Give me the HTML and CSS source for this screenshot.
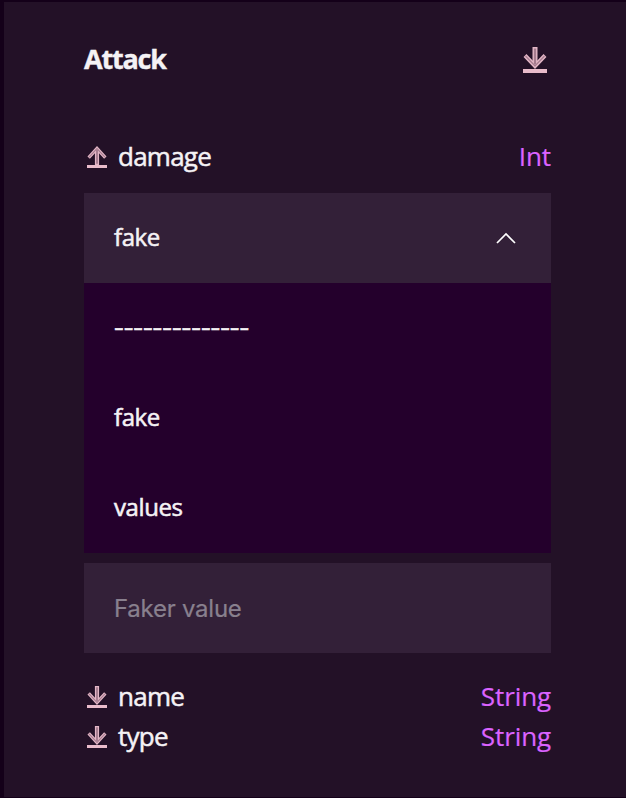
FILE: index.html
```html
<!DOCTYPE html>
<html lang="en">
<head>
<meta charset="utf-8">
<title>Attack</title>
<link rel="stylesheet" href="styles.css">
</head>
<body>
<svg class="symbols" aria-hidden="true">
  <symbol id="arrow" viewBox="0 0 24 22" preserveAspectRatio="none">
    <path class="line" d="M2 8.5 12 19 22 8.5"/>
    <path class="line shaft" d="M12 0v19"/>
    <path class="core" d="M2.5 9 12 19 21.5 9"/>
    <path class="core shaft-core" d="M12 1.5v16"/>
  </symbol>
</svg>
<main class="card">
  <header class="head">
    <h1 class="title">Attack</h1>
    <span class="icon icon-large"><svg class="arrow"><use href="#arrow"/></svg><i class="bar"></i></span>
  </header>
  <div class="field">
    <span class="icon up"><svg class="arrow"><use href="#arrow"/></svg><i class="bar"></i></span>
    <span class="name">damage</span><span class="type">Int</span>
  </div>
  <div class="select">
    <span class="label">fake</span>
    <svg class="chevron" viewBox="0 0 20 12"><path d="M1 11 10 2l9 9"/></svg>
  </div>
  <div class="menu">
    <div class="option"><span class="dashes">--------------</span></div>
    <div class="option"><span>fake</span></div>
    <div class="option"><span>values</span></div>
  </div>
  <div class="input"><span>Faker value</span></div>
  <div class="field">
    <span class="icon"><svg class="arrow"><use href="#arrow"/></svg><i class="bar"></i></span>
    <span class="name">name</span><span class="type">String</span>
  </div>
  <div class="field">
    <span class="icon"><svg class="arrow"><use href="#arrow"/></svg><i class="bar"></i></span>
    <span class="name">type</span><span class="type">String</span>
  </div>
</main>
</body>
</html>
```
FILE: styles.css
```css
* { box-sizing: border-box; }
body { margin: 0; background: #140019; font-family: "Open Sans", sans-serif; color: #f5f2f5; }
.symbols { position: absolute; width: 0; height: 0; }
.card { margin: 2px 0 0 4px; height: 795px; padding: 37px 75px 0 80px; background: #231127; }
.head { height: 98px; display: flex; align-items: flex-start; justify-content: space-between; }
.title { margin: 0; font-size: 27px; line-height: 40px; font-weight: 700; letter-spacing: -1.2px; -webkit-text-stroke: 0.4px; }
.icon { display: flex; flex-direction: column; width: 20px; height: 22px; margin: 0 3px 1px; flex: none; }
.icon-large { width: 24px; height: 26px; margin: 8px 4px; }
.arrow { width: 100%; flex: 1; min-height: 0; display: block; }
.bar { height: 3px; background: #e9bccb; }
.icon-large .bar { height: 4px; }
.up .arrow { transform: scaleY(-1); }
.line { fill: none; stroke: #e3b6c6; stroke-width: 4; }
.shaft { stroke-width: 5; }
.core { fill: none; stroke: #a47b8e; stroke-width: 1.2; }
.shaft-core { stroke-width: 2.2; }
.field { height: 40px; display: flex; align-items: center; font-size: 26px; line-height: 38px; }
.name { margin: 0 0 2px 8px; letter-spacing: -0.75px; -webkit-text-stroke: 0.5px; }
.type { margin: 0 0 2px auto; color: #db63ff; letter-spacing: -0.1px; -webkit-text-stroke: 0.2px; }
.select, .menu { font-size: 24px; letter-spacing: -0.4px; -webkit-text-stroke: 0.55px; }
.select { margin-top: 16px; height: 90px; padding: 0 35px 0 30px; background: #332038; display: flex; align-items: center; justify-content: space-between; }
.label { margin-bottom: 4px; }
.chevron { width: 20px; height: 12px; fill: none; stroke: #fff; stroke-width: 1.7; }
.menu { background: #24002c; margin-bottom: 10px; }
.option { height: 90px; padding: 0 0 4px 30px; display: flex; align-items: center; }
.dashes { letter-spacing: 0; transform: scaleX(1.25); transform-origin: left; }
.input { height: 90px; margin-bottom: 24px; padding-left: 30px; background: #332038; display: flex; align-items: center; font: 24px Inter, sans-serif; letter-spacing: -0.25px; color: #89808e; -webkit-text-stroke: 0.2px; }
```
